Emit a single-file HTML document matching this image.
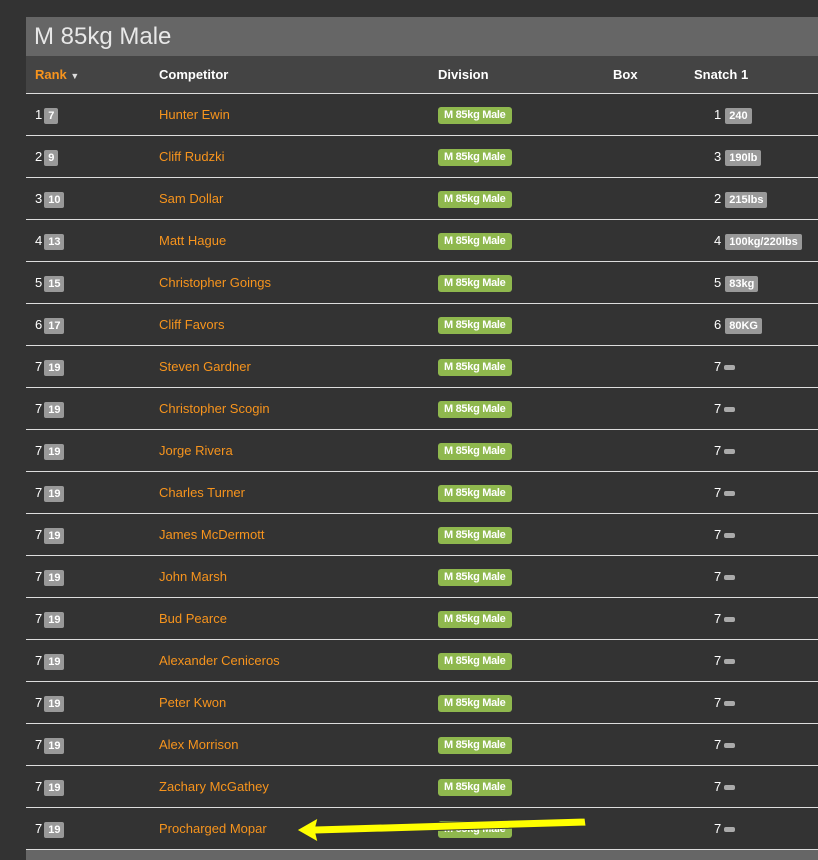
<!DOCTYPE html><html><head><style>
body{margin:0;background:#333;width:818px;height:857px;overflow:hidden;font-family:"Liberation Sans",sans-serif;position:relative}
.panel{position:absolute;left:26px;top:17px;width:792px}
.title{height:39px;background:#666;color:#e8e8e8;font-size:24px;line-height:40px;padding-left:8px}
.head{height:38px;background:#444;position:relative;color:#fff;font-weight:bold;font-size:13px;border-bottom:1px solid #ddd;box-sizing:border-box}
.c{position:absolute;top:0}
.head .c{line-height:37px}
.row{height:42px;position:relative;border-bottom:1px solid #ddd;box-sizing:border-box;font-size:13px;color:#fff}
.row .c{line-height:42px}
.o{color:#f7941d}
.b{display:inline-block;background:#999;color:#fff;font-weight:bold;font-size:11px;line-height:16px;padding:0 4px;border-radius:2px;vertical-align:middle;margin-left:2px;font-style:normal}
.g{display:inline-block;background:#8fb84e;color:#fff;font-weight:bold;font-size:11px;line-height:17px;padding:0 6px;border-radius:3px;vertical-align:middle;letter-spacing:-.3px;font-style:normal}
.dash{display:inline-block;width:11px;height:5px;background:#aaa;border-radius:2px;vertical-align:middle;margin-left:3px}
.foot{height:10px;background:#666}
</style></head><body>
<div class="panel">
<div class="title">M 85kg Male</div>
<div class="head"><div class="c o" style="left:9px">Rank <small style="font-size:9px;color:#ddd">▼</small></div><div class="c" style="left:133px">Competitor</div><div class="c" style="left:412px">Division</div><div class="c" style="left:587px">Box</div><div class="c" style="left:668px">Snatch 1</div></div>
<div id="rows"></div>
<div class="foot"></div>
</div>
<svg style="position:absolute;left:0;top:0" width="818" height="857"><polygon points="297,830 318,818 316,826 585,818 586,826 316,834 318,842" fill="#ffff00" stroke="#333" stroke-width="1"/></svg>
<script>
var d=[[1,7,"Hunter Ewin",1,"240"],[2,9,"Cliff Rudzki",3,"190lb"],[3,10,"Sam Dollar",2,"215lbs"],[4,13,"Matt Hague",4,"100kg/220lbs"],[5,15,"Christopher Goings",5,"83kg"],[6,17,"Cliff Favors",6,"80KG"]];
["Steven Gardner","Christopher Scogin","Jorge Rivera","Charles Turner","James McDermott","John Marsh","Bud Pearce","Alexander Ceniceros","Peter Kwon","Alex Morrison","Zachary McGathey","Procharged Mopar"].forEach(function(n){d.push([7,19,n,7,null])});
var h="";d.forEach(function(r){h+='<div class="row"><div class="c" style="left:9px">'+r[0]+'<i class="b">'+r[1]+'</i></div><div class="c o" style="left:133px">'+r[2]+'</div><div class="c" style="left:412px"><i class="g">M 85kg Male</i></div><div class="c" style="left:688px">'+r[3]+(r[4]?'<i class="b" style="margin-left:4px">'+r[4]+'</i>':'<i class="dash"></i>')+'</div></div>'});
document.getElementById("rows").innerHTML=h;
</script>
</body></html>
